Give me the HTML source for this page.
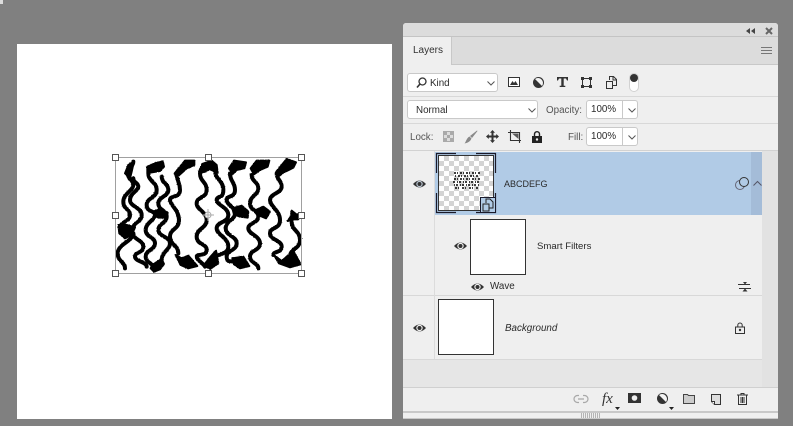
<!DOCTYPE html>
<html><head><meta charset="utf-8">
<style>
html,body{margin:0;padding:0}
body{width:793px;height:426px;background:#808080;position:relative;overflow:hidden;font-family:"Liberation Sans",sans-serif;color:#2a2a2a;font-size:9.8px}
#w{position:absolute;left:0;top:0;width:793px;height:426px;filter:blur(.3px)}
.a{position:absolute;box-sizing:border-box}
.t{position:absolute;line-height:12px;white-space:nowrap}
.box{position:absolute;box-sizing:border-box;background:#fff;border:1px solid #c9c9c9;border-radius:3px}
.h{position:absolute;width:7px;height:7px;box-sizing:border-box;background:#fff;border:1px solid #555}
svg{position:absolute;overflow:visible}
</style></head>
<body><div id="w">
<div class="a" style="left:0;top:0;width:3px;height:4px;background:#ddd"></div>
<!-- canvas -->
<div class="a" style="left:17px;top:44px;width:375px;height:375px;background:#fff"></div>
<svg style="left:100px;top:140px" width="220" height="150" viewBox="0 0 660 450">
<defs><filter id="j" x="0" y="0" width="660" height="450" filterUnits="userSpaceOnUse"><feTurbulence type="fractalNoise" baseFrequency=".22" numOctaves="1" seed="4"/><feDisplacementMap in="SourceGraphic" scale="4" xChannelSelector="R" yChannelSelector="G"/></filter></defs>
<g filter="url(#j)">
<g fill="none" stroke="#000" stroke-width="12" stroke-linejoin="round" stroke-linecap="round">
<path d="M100,65 C100,82 83,82 83,100 S100,118 100,135 S70,160 70,185 S90,205 90,225 S60,245 60,265 S95,278 95,290 S53,315 53,340 S75,365 75,385"/>
<path d="M100,115 C100,128 115,128 115,140 S90,160 90,180 S125,202 125,225 S100,245 100,265"/>
<path d="M100,280 C100,300 130,300 130,320 S105,335 105,350 S140,365 140,380"/>
<path d="M145,100 C145,125 170,125 170,150 S140,172 140,195 S165,210 165,225 S137,248 137,270 S165,290 165,310 S137,330 137,350 S165,370 165,390"/>
<path d="M185,110 C185,130 205,130 205,150 S175,170 175,190 S200,210 200,230 S175,250 175,270 S210,290 210,310 S185,335 185,360"/>
<path d="M230,100 C230,125 240,125 240,150 S210,165 210,180 S237,210 237,240 S210,265 210,290 S235,315 235,340"/>
<path d="M300,100 C300,125 320,125 320,150 S290,170 290,190 S320,215 320,240 S290,265 290,290 S320,310 320,330 S290,340 290,350 S310,370 315,380"/>
<path d="M345,90 C345,120 370,120 370,150 S350,165 350,180 S385,202 385,225 S350,245 350,265 S385,292 385,320 S340,340 340,360"/>
<path d="M390,100 C390,125 405,125 405,150 S380,165 380,180 S405,200 405,220 S377,242 377,265 S410,288 410,310 S380,330 380,350 S395,362 400,365"/>
<path d="M455,105 C455,125 475,125 475,145 S450,168 450,190 S475,210 475,230 S445,248 445,265 S480,288 480,310 S450,330 450,350 S475,368 475,385"/>
<path d="M530,100 C530,120 545,120 545,140 S510,160 510,180 S540,210 540,240 S510,260 510,280 S545,300 545,320 S520,332 520,345"/>
<path d="M575,245 C575,272 600,272 600,300 S570,325 570,350"/>
</g>
<g fill="#000" stroke="#000" stroke-width="6" stroke-linejoin="round">
<path d="M102,63 L85,75 L75,100 L90,115 L95,95Z"/>
<path d="M55,255 L80,255 L105,262 L95,285 L75,295 L58,280Z"/>
<path d="M142,80 L165,70 L188,64 L192,80 L180,93 L150,98 L142,98Z"/>
<path d="M158,215 L180,208 L203,218 L198,233 L175,233Z"/>
<path d="M152,385 L157,375 L185,357 L192,372 L180,388 L162,395Z"/>
<path d="M224,100 L255,62 L283,62 L283,75 L260,85 L240,103 L230,113Z"/>
<path d="M227,345 L245,355 L265,347 L292,378 L265,385 L242,375Z"/>
<path d="M297,95 L307,72 L335,62 L350,75 L353,98 L330,88 L305,98Z"/>
<path d="M312,375 L330,352 L348,332 L355,370 L330,387Z"/>
<path d="M387,85 L402,62 L438,67 L433,85 L410,90 L397,103Z"/>
<path d="M397,205 L425,197 L445,215 L443,233 L420,230 L402,223Z"/>
<path d="M397,355 L430,350 L448,378 L420,385 L402,373Z"/>
<path d="M452,85 L470,62 L508,62 L503,80 L480,90 L462,103Z"/>
<path d="M467,210 L490,200 L510,215 L498,235 L477,226Z"/>
<path d="M529,95 L560,57 L588,67 L580,83 L570,88 L550,98 L537,108Z"/>
<path d="M522,345 L545,363 L570,342 L580,333 L602,373 L570,382 L537,370Z"/>
<path d="M575,212 L590,224 L607,222 L594,238 L580,238 L563,243 L572,230Z"/>
</g>
</g>
</svg>
<div class="a" style="left:115px;top:157px;width:187px;height:117px;border:1px solid #a0a0a0"></div>
<div class="h" style="left:112px;top:154px"></div><div class="h" style="left:205px;top:154px"></div><div class="h" style="left:298px;top:154px"></div>
<div class="h" style="left:112px;top:212px"></div><div class="h" style="left:298px;top:212px"></div>
<div class="h" style="left:112px;top:270px"></div><div class="h" style="left:205px;top:270px"></div><div class="h" style="left:298px;top:270px"></div>
<svg style="left:202px;top:209px" width="12" height="12" viewBox="0 0 12 12"><circle cx="6" cy="6" r="3" fill="#fff" stroke="#aaa"/><path d="M6 0V12M0 6H12" stroke="#aaa"/></svg>

<!-- panel -->
<div class="a" style="left:403px;top:23px;width:375px;height:396px;background:#efefef;border-radius:3px 3px 0 0;overflow:hidden;border-bottom:1px solid #c8c8c8"></div>
<div class="a" style="left:403px;top:23px;width:375px;height:14px;background:#dcdcdc;border-bottom:1px solid #c4c4c4;border-radius:3px 3px 0 0"></div>
<div class="a" style="left:403px;top:37px;width:375px;height:28px;background:#dcdcdc;border-bottom:1px solid #c8c8c8"></div>
<div class="a" style="left:403px;top:37px;width:49px;height:28px;background:#efefef;border-right:1px solid #c8c8c8"></div>
<div class="t" style="left:413px;top:45px;color:#333;font-size:10px">Layers</div>
<svg style="left:746px;top:28px" width="9" height="6"><path d="M4 0V6L0 3ZM9 0V6L5 3Z" fill="#444"/></svg>
<svg style="left:765px;top:27px" width="8" height="8"><path d="M1 1L7 7M7 1L1 7" stroke="#666" stroke-width="2"/></svg>
<svg style="left:761px;top:47px" width="11" height="7"><path d="M0 .5H11M0 3.500H11M0 6.500H11" stroke="#777"/></svg>

<!-- row 1 -->
<div class="box" style="left:407px;top:73px;width:91px;height:19px"></div>
<svg style="left:416px;top:77px" width="11" height="11" viewBox="0 0 11 11"><circle cx="6.500" cy="4.500" r="3.500" fill="none" stroke="#333" stroke-width="1.300"/><path d="M4 7L1 10.500" stroke="#333" stroke-width="1.600"/></svg>
<div class="t" style="left:430px;top:77px;margin-top:1px">Kind</div>
<svg style="left:487px;top:81px" width="8" height="5"><path d="M.5 .5L4 4L7.500 .5" fill="none" stroke="#555"/></svg>
<svg style="left:508px;top:77px" width="12" height="10"><rect x=".5" y=".5" width="11" height="9" fill="#fff" stroke="#333"/><path d="M2 8L4.500 4L6 6L7.500 4L10 8Z" fill="#333"/></svg>
<svg style="left:533px;top:77px" width="11" height="11"><circle cx="5.500" cy="5.500" r="5.500" fill="#333"/><path d="M2 2A5 5 0 0 1 9 9Z" fill="#f4f4f4"/></svg>
<svg style="left:557px;top:77px" width="11" height="10"><path d="M0 0H11V3.500H10L9 1.500H6.700V8.800H8.300V10H2.700V8.800H4.300V1.500H2L1 3.500H0Z" fill="#333"/></svg>
<svg style="left:581px;top:77px" width="11" height="11"><path d="M1.500 1.500H9.500V9.500H1.500Z" fill="none" stroke="#333"/><path d="M0 0H3V3H0ZM8 0H11V3H8ZM0 8H3V11H0ZM8 8H11V11H8Z" fill="#333"/></svg>
<svg style="left:606px;top:76px" width="11" height="13"><path d="M3.500 4V.5H7.500L10.500 3.500V9.500H6.500" fill="#efefef" stroke="#333"/><path d="M.5 5.500H6.500V12.500H.5Z" fill="#efefef" stroke="#333"/><path d="M7 .5V4H10.500" fill="none" stroke="#333"/></svg>
<div class="a" style="left:629px;top:73px;width:10px;height:19px;background:#fff;border:1px solid #d2d2d2;border-radius:5px"></div>
<div class="a" style="left:630px;top:74px;width:8px;height:8px;background:#333;border-radius:50%"></div>
<div class="a" style="left:403px;top:96px;width:375px;height:1px;background:#d8d8d8"></div>

<!-- row 2 -->
<div class="box" style="left:407px;top:100px;width:131px;height:19px"></div>
<div class="t" style="left:416px;top:105px">Normal</div>
<svg style="left:528px;top:108px" width="8" height="5"><path d="M.5 .5L4 4L7.500 .5" fill="none" stroke="#555"/></svg>
<div class="t" style="left:546px;top:105px;color:#555">Opacity:</div>
<div class="box" style="left:586px;top:100px;width:52px;height:19px"></div>
<div class="a" style="left:622px;top:100px;width:1px;height:19px;background:#c9c9c9"></div>
<div class="t" style="left:591px;top:104px">100%</div>
<svg style="left:628px;top:108px" width="8" height="5"><path d="M.5 .5L4 4L7.500 .5" fill="none" stroke="#555"/></svg>
<div class="a" style="left:403px;top:123px;width:375px;height:1px;background:#d8d8d8"></div>

<!-- row 3 -->
<div class="t" style="left:410px;top:132px;color:#555">Lock:</div>
<svg style="left:443px;top:131px" width="11" height="11"><rect x=".5" y=".5" width="10" height="10" fill="#ddd" stroke="#aaa"/><path d="M1 1H4V4H1ZM7 1H10V4H7ZM4 4H7V7H4ZM1 7H4V10H1ZM7 7H10V10H7Z" fill="#aaa"/></svg>
<svg style="left:464px;top:130px" width="14" height="14"><path d="M13 .5L6 6L8 8L13.500 1Z" fill="#888"/><path d="M5.500 6.500L7.500 8.500C6 12 3 13 .5 13.500C2 12 2.500 8 5.500 6.500Z" fill="#888"/></svg>
<svg style="left:486px;top:130px" width="13" height="13"><path d="M6.500 0L9 2.800H7.500V5.500H10.200V4L13 6.500L10.200 9V7.500H7.500V10.200H9L6.500 13L4 10.200H5.500V7.500H2.800V9L0 6.500L2.800 4V5.500H5.500V2.800H4Z" fill="#333"/></svg>
<svg style="left:508px;top:130px" width="14" height="13"><path d="M2.500 0V10.500H13M0 2.500H11.500V13" fill="none" stroke="#333" stroke-width="1.100"/><path d="M4 3.500H10.500V9Z" fill="#333" opacity=".8"/></svg>
<svg style="left:532px;top:131px" width="10" height="12"><path d="M2.500 5V3.200A2.500 2.500 0 0 1 7.500 3.200V5" fill="none" stroke="#222" stroke-width="1.400"/><path d="M0 5H10V12H0Z" fill="#222"/><circle cx="5" cy="8.500" r="1.200" fill="#efefef"/></svg>
<div class="t" style="left:568px;top:132px;color:#555">Fill:</div>
<div class="box" style="left:586px;top:127px;width:52px;height:19px"></div>
<div class="a" style="left:622px;top:127px;width:1px;height:19px;background:#c9c9c9"></div>
<div class="t" style="left:591px;top:131px">100%</div>
<svg style="left:628px;top:135px" width="8" height="5"><path d="M.5 .5L4 4L7.500 .5" fill="none" stroke="#555"/></svg>
<div class="a" style="left:403px;top:150px;width:375px;height:1px;background:#d2d2d2"></div>

<!-- layers area -->
<div class="a" style="left:403px;top:151px;width:359px;height:208px;background:#efefef"></div>
<div class="a" style="left:762px;top:151px;width:16px;height:236px;background:#e2e2e2"></div>
<div class="a" style="left:403px;top:359px;width:359px;height:28px;background:#e6e6e6"></div>
<div class="a" style="left:435px;top:152px;width:316px;height:63px;background:#b1cbe6"></div>
<div class="a" style="left:751px;top:152px;width:11px;height:63px;background:#a4bcd8"></div>
<div class="a" style="left:403px;top:295px;width:359px;height:1px;background:#d8d8d8"></div>
<div class="a" style="left:403px;top:359px;width:359px;height:1px;background:#d8d8d8"></div>
<div class="a" style="left:403px;top:387px;width:375px;height:1px;background:#d0d0d0"></div>
<div class="a" style="left:434px;top:151px;width:1px;height:208px;background:#dcdcdc"></div>

<!-- thumb 1 -->
<div class="a" style="left:438px;top:155px;width:56px;height:56px;border:1px solid #333;background:#fff conic-gradient(#d4d4d4 25%,#fff 0 50%,#d4d4d4 0 75%,#fff 0) 0 0/10px 10px"></div>
<svg style="left:453px;top:172px" width="28" height="18"><g stroke="#000" stroke-width="1.400" fill="none"><path d="M1 1H27" stroke-dasharray="2 1 1 2"/><path d="M2 4H26" stroke-dasharray="1 2 2 1"/><path d="M1 7H27" stroke-dasharray="2 1 1 2"/><path d="M0 10H27" stroke-dasharray="2 2 1 1"/><path d="M1 13H27" stroke-dasharray="1 1 2 2"/><path d="M2 16H26" stroke-dasharray="2 1 1 3"/></g></svg>
<svg style="left:436px;top:153px" width="60" height="60"><path d="M.5 20V.5H20M40 .5H59.500V20M59.500 40V59.500H40M20 59.500H.5V40" fill="none" stroke="#1a1a2a" stroke-width="1.200"/></svg>
<div class="a" style="left:480px;top:197px;width:16px;height:16px;background:#b1cbe6;border:1px solid #1a1a2a"></div>
<svg style="left:482px;top:198px" width="12" height="14"><path d="M4 5V1H8L11 4V10H7" fill="none" stroke="#222"/><path d="M1 6H7V13H1Z" fill="none" stroke="#222"/></svg>

<!-- eyes -->
<svg style="left:413px;top:179px" width="13" height="10" viewBox="0 0 13 10"><path d="M0 5Q6.500 -2 13 5Q6.500 12 0 5Z" fill="#333"/><circle cx="6.500" cy="5" r="3.200" fill="#b9c4d0"/><circle cx="6.500" cy="5" r="2" fill="#333"/></svg>
<svg style="left:454px;top:241px" width="13" height="10" viewBox="0 0 13 10"><path d="M0 5Q6.500 -2 13 5Q6.500 12 0 5Z" fill="#333"/><circle cx="6.500" cy="5" r="3.200" fill="#efefef"/><circle cx="6.500" cy="5" r="2" fill="#333"/></svg>
<svg style="left:471px;top:282px" width="13" height="10" viewBox="0 0 13 10"><path d="M0 5Q6.500 -2 13 5Q6.500 12 0 5Z" fill="#333"/><circle cx="6.500" cy="5" r="3.200" fill="#efefef"/><circle cx="6.500" cy="5" r="2" fill="#333"/></svg>
<svg style="left:413px;top:323px" width="13" height="10" viewBox="0 0 13 10"><path d="M0 5Q6.500 -2 13 5Q6.500 12 0 5Z" fill="#333"/><circle cx="6.500" cy="5" r="3.200" fill="#efefef"/><circle cx="6.500" cy="5" r="2" fill="#333"/></svg>

<div class="t" style="left:504px;top:178px;font-size:9px">ABCDEFG</div>
<svg style="left:735px;top:177px" width="14" height="13"><circle cx="5" cy="8" r="4.500" fill="none" stroke="#667"/><circle cx="9" cy="5" r="4.500" fill="#b1cbe6" stroke="#333"/></svg>
<svg style="left:753px;top:181px" width="9" height="5"><path d="M.5 4.500L4.500 .5L8.500 4.500" fill="none" stroke="#556"/></svg>

<div class="a" style="left:470px;top:219px;width:56px;height:56px;background:#fff;border:1px solid #333"></div>
<div class="t" style="left:537px;top:241px;font-size:9.6px">Smart Filters</div>
<div class="t" style="left:490px;top:281px">Wave</div>
<svg style="left:738px;top:282px" width="13" height="10"><path d="M0 2.500H12M1 6.500H13" stroke="#333"/><path d="M5 0H9L7 2.500ZM7 6.500L9.500 9.500H4.500Z" fill="#333"/></svg>

<div class="a" style="left:438px;top:299px;width:56px;height:56px;background:#fff;border:1px solid #333"></div>
<div class="t" style="left:505px;top:323px;font-style:italic">Background</div>
<svg style="left:735px;top:322px" width="10" height="12"><path d="M2.800 5V3.200A2.200 2.200 0 0 1 7.200 3.200V5" fill="none" stroke="#333"/><rect x=".5" y="5" width="9" height="6.500" fill="#efefef" stroke="#333"/><circle cx="5" cy="8" r="1.200" fill="#333"/></svg>

<!-- footer -->
<div class="a" style="left:403px;top:388px;width:375px;height:23px;background:#efefef"></div>
<div class="a" style="left:403px;top:411px;width:375px;height:2px;background:#c8c8c8"></div>
<svg style="left:574px;top:395px" width="14" height="8"><path d="M5 .5H3.500A3.500 3.500 0 0 0 3.500 7.500H5M9 .5H10.500A3.500 3.500 0 0 1 10.500 7.500H9M4 4H10" fill="none" stroke="#a8a8a8" stroke-width="1.200"/></svg>
<div class="t" style="left:602px;top:392px;font:italic 15px/15px 'Liberation Serif',serif;color:#333">fx</div>
<svg style="left:615px;top:407px" width="5" height="3"><path d="M0 0H5L2.500 3Z" fill="#222"/></svg>
<svg style="left:628px;top:393px" width="13" height="10"><rect width="13" height="10" fill="#333"/><circle cx="6.500" cy="5" r="2.800" fill="#efefef"/></svg>
<svg style="left:657px;top:393px" width="11" height="11"><circle cx="5.500" cy="5.500" r="5.500" fill="#333"/><path d="M2 2A5 5 0 0 1 9 9Z" fill="#f4f4f4"/></svg>
<svg style="left:669px;top:407px" width="5" height="3"><path d="M0 0H5L2.500 3Z" fill="#222"/></svg>
<svg style="left:683px;top:394px" width="12" height="10"><path d="M.5 9.500V.5H4.500L5.500 1.500H11.500V9.500Z" fill="#ccc" stroke="#444"/></svg>
<svg style="left:711px;top:394px" width="10" height="11"><path d="M.5 .5H9.500V10.500H3.500L.5 7.500Z" fill="#ddd" stroke="#333"/><path d="M.5 7.500H3.500V10.500" fill="#fff" stroke="#333"/></svg>
<svg style="left:737px;top:393px" width="11" height="12"><path d="M0 2H11M4 2V.5H7V2M1.500 2V11.500H9.500V2M4 4V10M5.500 4V10M7 4V10" fill="none" stroke="#333"/></svg>
<div class="a" style="left:581px;top:413px;width:20px;height:5px;background:repeating-linear-gradient(90deg,#b4b4b4 0 1px,#efefef 1px 2px)"></div>
</div></body></html>
